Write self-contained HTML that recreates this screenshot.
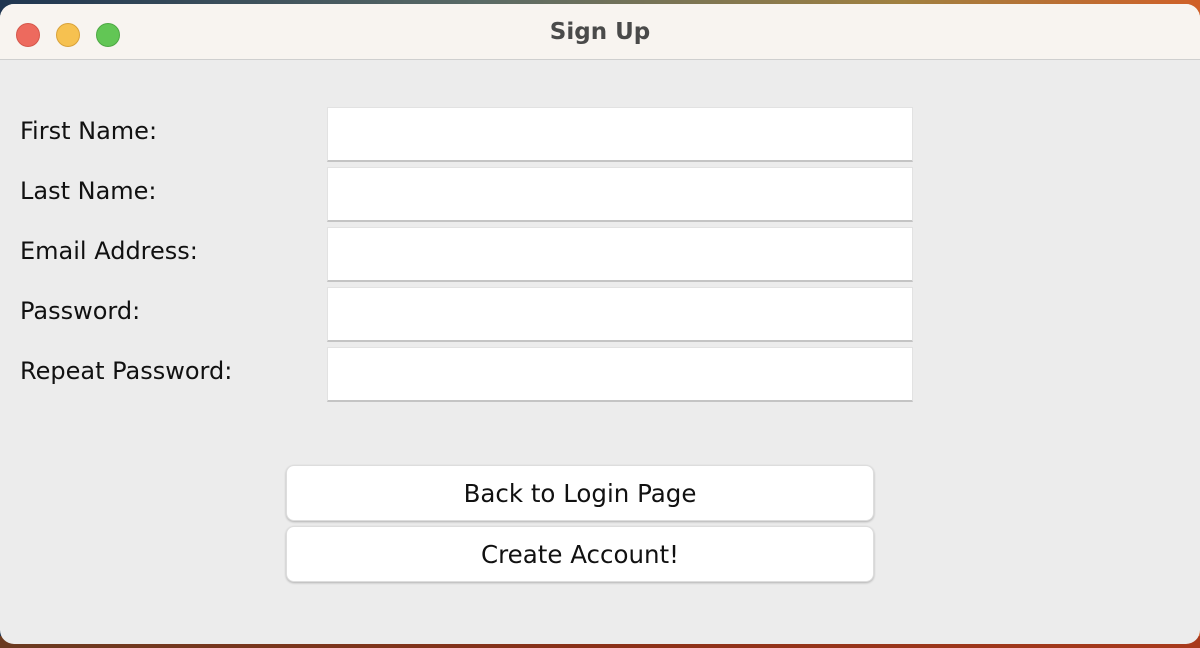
<!DOCTYPE html>
<html><head><meta charset="utf-8"><style>
*{margin:0;padding:0;box-sizing:border-box}
html,body{width:1200px;height:648px;overflow:hidden}
body{background:linear-gradient(90deg,#1f3550 0%,#5a6a66 40%,#a08040 75%,#d06028 100%);position:relative;font-family:"DejaVu Sans","Liberation Sans",sans-serif}
.bot{position:absolute;left:0;right:0;bottom:0;height:12px;background:linear-gradient(90deg,#6a3a20,#8a3018 50%,#a83a1c)}
.win{position:absolute;left:0;top:4px;width:1200px;height:640px;background:#ececec;border-radius:14px;overflow:hidden}
.tb{height:56px;background:#f8f4f0;border-bottom:1px solid #cfcfcf;position:relative}
.tb h1{position:absolute;left:0;right:0;top:15px;text-align:center;font-size:23px;font-weight:bold;color:#4a4a4a}
.d{position:absolute;top:19px;width:24px;height:24px;border-radius:50%}
.lbl{position:absolute;left:20px;font-size:24px;color:#111}
.f{position:absolute;left:327px;width:586px;height:55px;background:#fff;border:1px solid #e2e2e2;border-bottom:2px solid #c4c4c4}
.b{position:absolute;left:286px;width:588px;height:56px;background:#fff;border-radius:8px;box-shadow:0 1px 2px rgba(0,0,0,.25);border:1px solid #ddd;text-align:center;line-height:56px;font-size:24.5px;color:#111}
</style></head><body>
<div class="bot"></div>
<div class="win">
<div class="tb">
<div class="d" style="left:16px;background:#ed6a5e;border:1px solid #d5574b"></div>
<div class="d" style="left:56px;background:#f6c150;border:1px solid #d9a23a"></div>
<div class="d" style="left:96px;background:#62c655;border:1px solid #4ea844"></div>
<h1>Sign Up</h1>
</div>
<div class="lbl" style="top:113px">First Name:</div>
<div class="lbl" style="top:173px">Last Name:</div>
<div class="lbl" style="top:233px">Email Address:</div>
<div class="lbl" style="top:293px">Password:</div>
<div class="lbl" style="top:353px">Repeat Password:</div>
<div class="f" style="top:103px"></div>
<div class="f" style="top:163px"></div>
<div class="f" style="top:223px"></div>
<div class="f" style="top:283px"></div>
<div class="f" style="top:343px"></div>
<div class="b" style="top:461px">Back to Login Page</div>
<div class="b" style="top:522px">Create Account!</div>
</div>
</body></html>
